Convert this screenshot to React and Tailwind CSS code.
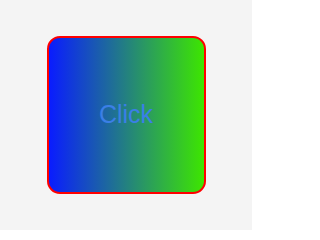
export default function App() {
    return (
        <div className="flex h-[230px] w-[252px] items-center justify-center bg-[#f4f4f4]">
            <button
                type="button"
                className="flex h-[158px] w-[159px] items-center justify-center rounded-[13px] border-2 border-[#ff0000] bg-[linear-gradient(to_right,#0a1cff,#3de600)] text-[25px] text-[#3b7fe6]"
                style={{ fontFamily: '"Liberation Sans", Arial, sans-serif' }}
            >
                Click
            </button>
        </div>
    );
}
